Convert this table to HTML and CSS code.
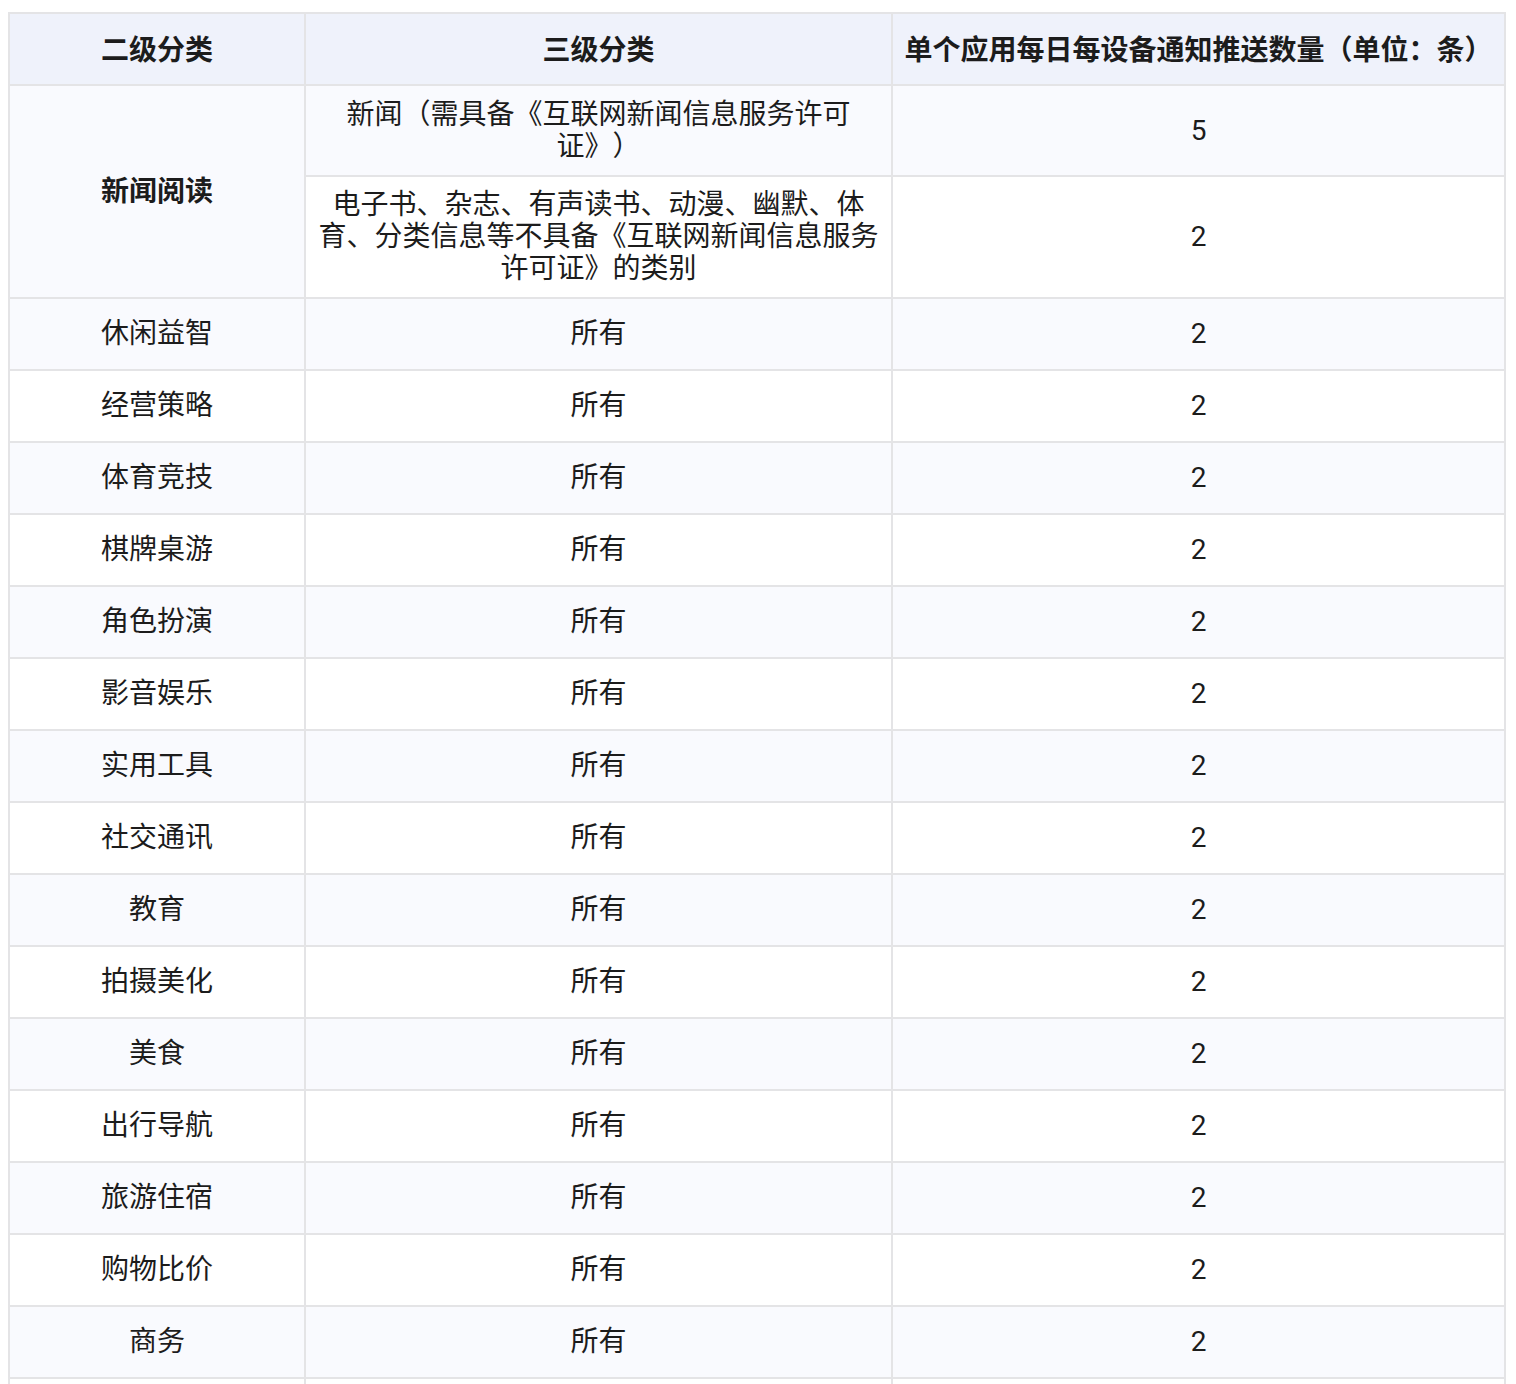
FILE: index.html
```html
<!DOCTYPE html>
<html lang="zh-CN">
<head>
<meta charset="utf-8">
<title>通知推送数量</title>
<link rel="stylesheet" href="styles.css">
</head>
<body>
<div class="wrap">
<table class="push-table">
  <colgroup>
    <col class="c1"><col class="c2"><col class="c3">
  </colgroup>
  <thead>
    <tr><th>二级分类</th><th>三级分类</th><th>单个应用每日每设备通知推送数量（单位：条）</th></tr>
  </thead>
  <tbody>
    <tr class="alt first"><td rowspan="2" class="strong">新闻阅读</td><td>新闻（需具备《互联网新闻信息服务许可证》）</td><td>5</td></tr>
    <tr><td>电子书、杂志、有声读书、动漫、幽默、体育、分类信息等不具备《互联网新闻信息服务许可证》的类别</td><td>2</td></tr>
    <tr class="alt single"><td>休闲益智</td><td>所有</td><td>2</td></tr>
    <tr class="single"><td>经营策略</td><td>所有</td><td>2</td></tr>
    <tr class="alt single"><td>体育竞技</td><td>所有</td><td>2</td></tr>
    <tr class="single"><td>棋牌桌游</td><td>所有</td><td>2</td></tr>
    <tr class="alt single"><td>角色扮演</td><td>所有</td><td>2</td></tr>
    <tr class="single"><td>影音娱乐</td><td>所有</td><td>2</td></tr>
    <tr class="alt single"><td>实用工具</td><td>所有</td><td>2</td></tr>
    <tr class="single"><td>社交通讯</td><td>所有</td><td>2</td></tr>
    <tr class="alt single"><td>教育</td><td>所有</td><td>2</td></tr>
    <tr class="single"><td>拍摄美化</td><td>所有</td><td>2</td></tr>
    <tr class="alt single"><td>美食</td><td>所有</td><td>2</td></tr>
    <tr class="single"><td>出行导航</td><td>所有</td><td>2</td></tr>
    <tr class="alt single"><td>旅游住宿</td><td>所有</td><td>2</td></tr>
    <tr class="single"><td>购物比价</td><td>所有</td><td>2</td></tr>
    <tr class="alt single"><td>商务</td><td>所有</td><td>2</td></tr>
    <tr class="single"><td>儿童</td><td>所有</td><td>2</td></tr>
  </tbody>
</table>
</div>
</body>
</html>
```

FILE: styles.css
```css
html, body {
  margin: 0;
  padding: 0;
  background: #ffffff;
}
body {
  font-family: Roboto, "Noto Sans CJK SC", "Noto Sans", sans-serif;
  color: #1c1c1c;
}
.wrap {
  padding: 12px 10px 0 8px;
}
.push-table {
  width: 100%;
  border-collapse: collapse;
  table-layout: fixed;
  font-size: 28px;
  line-height: 32px;
  border: 2px solid #e4e4e6;
  text-spacing-trim: space-all;
}
.c1 { width: 296px; }
.c2 { width: 587px; }
.c3 { width: auto; }
.push-table th,
.push-table td {
  border: 2px solid #e4e4e6;
  text-align: center;
  vertical-align: middle;
  padding: 12px 10px;
  font-weight: 400;
}
.push-table th {
  background: #eff2fb;
  font-weight: 700;
  height: 72px;
  box-sizing: border-box;
  padding-top: 14px;
  padding-bottom: 10px;
}
.push-table tr.alt td {
  background: #f9fafe;
}
.push-table td.strong {
  font-weight: 700;
}
.push-table tr.first td {
  height: 91px;
  box-sizing: border-box;
}
.push-table tr.single td {
  height: 72px;
  box-sizing: border-box;
}
```
